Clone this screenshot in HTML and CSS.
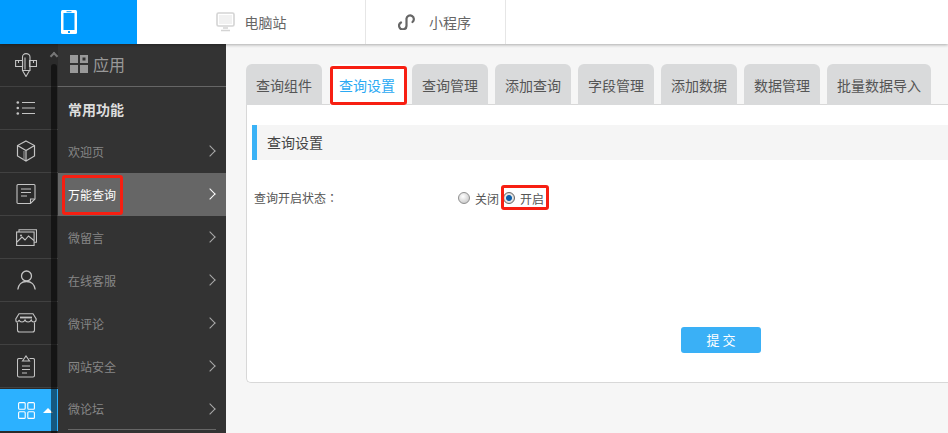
FILE: index.html
```html
<!DOCTYPE html>
<html lang="zh-CN">
<head>
<meta charset="utf-8">
<title>查询设置</title>
<link rel="stylesheet" href="styles.css">
</head>
<body>
<header class="topbar">
  <div class="device device-active">
    <svg width="16" height="24" viewBox="0 0 16 24"><rect width="16" height="24" rx="1.5" fill="#fff"/><rect x="2.5" y="3" width="11" height="17" fill="#009cff"/><rect x="5.5" y="1.2" width="5" height="1" fill="#009cff"/><rect x="7" y="21" width="2" height="2" fill="#009cff"/></svg>
  </div>
  <div class="device device-pc">
    <svg width="19" height="20" viewBox="0 0 19 20" fill="none" stroke="#d4d4d4"><rect x="1" y="1" width="17" height="13" rx="1.5" stroke-width="1.6"/><rect x="3" y="3" width="13" height="9" fill="#f1f1f1" stroke="none"/><path d="M7 16h5M5 18.5h9" stroke-width="1.6"/></svg>
    <span>电脑站</span>
  </div>
  <div class="device device-mini">
    <svg width="18" height="16" viewBox="0 0 18 16" fill="none" stroke="#666" stroke-width="2.2" stroke-linecap="round"><path d="M3 8.500A3.700 3.700 0 1 0 8.500 11.500V4.500A3.700 3.700 0 1 1 14.500 8"/></svg>
    <span>小程序</span>
  </div>
</header>
<div class="main">
  <nav class="rail">
    <div class="rail-item"><svg width="22" height="24" viewBox="0 0 22 24" fill="none" stroke="#c4c4c4" stroke-width="1.100"><path d="M.6 7.500h7v6h-7zM14.500 7.500h7v6h-7zM7.500 4c0-2 1.500-3.400 3.500-3.400S15 2 15 4v13.500H7.500z"/><path d="M7.500 17.500l3.500 6 3.500-6M3.500 7.500v2.500M18.500 7.500v2.500M10 4.500v12"/></svg></div>
    <div class="rail-item"><svg width="20" height="16" viewBox="0 0 20 16" fill="none" stroke="#c4c4c4"><path d="M6 2.500h13M6 8h13M6 13.500h13"/><circle cx="1.800" cy="2.500" r="1.300" fill="#c4c4c4" stroke="none"/><circle cx="1.800" cy="8" r="1.300" fill="#c4c4c4" stroke="none"/><circle cx="1.800" cy="13.500" r="1.300" fill="#c4c4c4" stroke="none"/></svg></div>
    <div class="rail-item"><svg width="20" height="22" viewBox="0 0 20 22" fill="none" stroke="#c4c4c4" stroke-width="1.200"><path d="M10 1l8.500 4.500v10.500L10 21 1.500 16V5.500zM1.500 5.500L10 10.500l8.500-5M10 10.500V21"/><path d="M8 11v9" stroke="#8a8a8a"/></svg></div>
    <div class="rail-item"><svg width="20" height="22" viewBox="0 0 20 22" fill="none" stroke="#c4c4c4" stroke-width="1.100"><path d="M2 1.500h16a1 1 0 0 1 1 1V16l-4.500 4.500H2a1 1 0 0 1-1-1v-17a1 1 0 0 1 1-1z"/><path d="M5 6h10M5 9.500h10M5 13h6M14.500 20v-4h4"/></svg></div>
    <div class="rail-item"><svg width="21" height="17" viewBox="0 0 21 17" fill="none" stroke="#c4c4c4" stroke-width="1.100"><rect x=".6" y="3" width="17.500" height="13.500"/><path d="M3 3V.8h17.500v12.500h-2.400M1 13l5-5 3 3 3.500-4 5.500 4.500"/><circle cx="5" cy="6.500" r="1" fill="#c4c4c4" stroke="none"/></svg></div>
    <div class="rail-item"><svg width="19" height="20" viewBox="0 0 19 20" fill="none" stroke="#c4c4c4" stroke-width="1.300"><circle cx="9.500" cy="6" r="5"/><path d="M.8 19.500c.5-4.800 3.800-8 8.700-8s8.200 3.200 8.700 8"/></svg></div>
    <div class="rail-item"><svg width="22" height="20" viewBox="0 0 22 20" fill="none" stroke="#c4c4c4" stroke-width="1.100"><path d="M4 .8h14l3.200 5.200c0 2-1 3-2.300 3-1.300 0-2.400-.8-2.700-2-.5 1.200-1.800 2-3.100 2-1.300 0-2.700-.8-3.100-2-.5 1.200-1.700 2-3 2-1.400 0-2.600-.8-3-2-.2 1.200-1 2-2.300 2C1.500 9 .8 8 .8 6z"/><path d="M2.500 9.500V17a2 2 0 0 0 2 2h13a2 2 0 0 0 2-2V9.500"/><path d="M5 4.500h12" stroke-width="1.800"/></svg></div>
    <div class="rail-item"><svg width="18" height="23" viewBox="0 0 18 23" fill="none" stroke="#c4c4c4" stroke-width="1.100"><path d="M5.500 3.500H2a1.500 1.500 0 0 0-1.500 1.500v15.500A1.500 1.500 0 0 0 2 22h14a1.500 1.500 0 0 0 1.500-1.500V5A1.500 1.500 0 0 0 16 3.500h-3.500"/><path d="M5.500 6l3.500-5 3.500 5z"/><path d="M5 11h8M5 14.500h8M5 18h5"/></svg></div>
    <div class="rail-item rail-active"><svg width="17" height="17" viewBox="0 0 17 17" fill="none" stroke="#fff" stroke-width="1.100"><rect x=".6" y=".6" width="6.600" height="6.600" rx="1"/><rect x="9.800" y=".6" width="6.600" height="6.600" rx="1"/><rect x=".6" y="9.800" width="6.600" height="6.600" rx="1"/><rect x="9.800" y="9.800" width="6.600" height="6.600" rx="1"/></svg><i class="rail-caret"></i></div>
    <div class="rail-scroll"></div>
    <i class="rail-scroll-up"></i>
  </nav>
  <aside class="panel">
    <div class="panel-head">
      <svg width="18" height="18" viewBox="0 0 18 18"><path fill="#999" d="M0 0h8v8H0zM10 10h8v8h-8zM0 10h8v8H0zM10 0h8v8h-8zM12.500 2.500v3h3v-3z" fill-rule="evenodd"/></svg>
      <span>应用</span>
    </div>
    <div class="panel-title">常用功能</div>
    <a class="panel-item"><span>欢迎页</span><i class="chev"></i></a>
    <a class="panel-item panel-active"><span>万能查询</span><i class="chev"></i><b class="mark mark-nav"></b></a>
    <a class="panel-item"><span>微留言</span><i class="chev"></i></a>
    <a class="panel-item"><span>在线客服</span><i class="chev"></i></a>
    <a class="panel-item"><span>微评论</span><i class="chev"></i></a>
    <a class="panel-item"><span>网站安全</span><i class="chev"></i></a>
    <a class="panel-item panel-last"><span>微论坛</span><i class="chev"></i></a>
  </aside>
  <main class="content">
    <div class="tabs">
      <a class="tab">查询组件</a>
      <a class="tab tab-active">查询设置<b class="mark"></b></a>
      <a class="tab">查询管理</a>
      <a class="tab">添加查询</a>
      <a class="tab">字段管理</a>
      <a class="tab">添加数据</a>
      <a class="tab">数据管理</a>
      <a class="tab tab-wide">批量数据导入</a>
    </div>
    <section class="card">
      <h2 class="card-title">查询设置</h2>
      <div class="form-row">
        <span class="form-label" lang="zh-TW">查询开启状态：</span>
        <label class="radio"><i class="dot"></i>关闭</label>
        <label class="radio radio-on"><i class="dot dot-on"></i>开启<b class="mark"></b></label>
      </div>
      <div class="form-actions"><button class="submit" type="button">提 交</button></div>
    </section>
  </main>
</div>
</body>
</html>
```

FILE: styles.css
```css
* { box-sizing: border-box; }
html, body { margin: 0; height: 433px; overflow: hidden; }
body { font-family: "Noto Sans CJK SC", "Liberation Sans", sans-serif; font-size: 12px; color: #666; background: #f6f6f6; }

.topbar { display: flex; height: 44px; background: #fff; box-shadow: 0 1px 3px rgba(0,0,0,.3); position: relative; z-index: 2; }
.device { display: flex; align-items: center; justify-content: center; font-size: 14px; color: #666; border-right: 1px solid #e6e6e6; padding-bottom: 1px; }
.device-active { width: 137px; background: #009cff; border-right: 0; padding-bottom: 0; }
.device-pc { width: 229px; gap: 10px; padding-right: 0; }
.device-mini { width: 140px; gap: 13px; padding-right: 2px; }

.main { display: flex; height: 389px; }

.rail { width: 58px; flex: none; background: #2b2b2b; position: relative; }
.rail-item { height: 43px; display: flex; align-items: center; justify-content: center; padding-right: 6px; border-bottom: 1px solid #414141; position: relative; }
.rail-active { background: #2cb1ff; border-bottom: 0; height: 42px; margin-top: 1px; }
.rail-caret { position: absolute; left: 43px; top: 19px; border: 5px solid transparent; border-top: 0; border-bottom: 5px solid #fff; }
.rail-scroll { position: absolute; left: 51px; top: 20px; width: 6px; height: 369px; background: rgba(0,0,0,.5); border-radius: 3px 3px 0 0; }
.rail-scroll-up { position: absolute; left: 51px; top: 9px; width: 6px; height: 6px; border-left: 2px solid #777; border-top: 2px solid #777; transform: rotate(45deg); }

.panel { width: 168px; flex: none; background: #333; color: #868686; font-size: 12px; }
.panel-head { height: 43px; display: flex; align-items: center; gap: 5px; padding: 0 0 2px 12px; border-bottom: 1px solid #666; font-size: 16px; color: #999; }
.panel-title { height: 43px; display: flex; align-items: center; padding-left: 10px; font-weight: 700; font-size: 14px; color: #ddd; }
.panel-item { height: 43px; display: flex; align-items: center; justify-content: space-between; padding: 0 10px 1px; position: relative; }
.panel-active { background: #666; color: #fff; }
.panel-last { height: 42px; }
.panel-last::after { content: ""; position: absolute; left: 10px; right: 10px; bottom: 0; height: 1px; background: #666; }
.chev { width: 8px; height: 8px; border-top: 1.500px solid #aaa; border-right: 1.500px solid #aaa; transform: rotate(45deg); margin-right: 2px; }
.panel-active .chev { border-color: #fff; }

.mark { position: absolute; border: 3px solid #f71f12; border-radius: 3px; pointer-events: none; }
.mark-nav { left: 4px; top: 2px; width: 61px; height: 40px; }

.content { flex: 1; min-width: 0; padding: 20px 0 0 20px; }
.tabs { display: flex; gap: 7px; height: 41px; font-size: 14px; }
.tab { width: 76px; height: 41px; display: flex; align-items: center; justify-content: center; background: #d9dadb; color: #555; border-radius: 6px 6px 0 0; position: relative; }
.tab-active { background: #fff; color: #2aa9f3; margin-left: 1px; margin-right: -1px; padding-right: 2px; z-index: 1; }
.tab-active .mark { left: 0; top: 2px; width: 77px; height: 39px; }
.tab-wide { width: 104px; }

.card { width: 740px; height: 279px; background: #fff; border: 1px solid #d8d8d8; border-right: 0; border-radius: 0 0 0 5px; padding: 20px 0 0 5px; margin-top: -1px; }
.card-title { margin: 0; height: 35px; display: flex; align-items: center; padding: 0 0 2px 10px; border-left: 5px solid #3ab2f6; background: #f5f5f5; font-size: 14px; font-weight: 400; color: #444; }
.form-row { display: flex; align-items: center; height: 26px; margin: 25px 0 0 2px; color: #555; }
.form-label { width: 204px; font-family: "Noto Sans CJK TC", sans-serif; padding-bottom: 1px; }
.radio { display: flex; align-items: center; gap: 5px; position: relative; padding-right: 4px; }
.radio-on .mark { left: -2px; top: -5px; width: 48px; height: 25px; }
.dot { width: 12px; height: 12px; border-radius: 50%; border: 1px solid #8f8f8f; background: radial-gradient(circle at 40% 35%, #fff, #bdbdbd); }
.dot-on { border-color: #666; background: radial-gradient(circle, #0a5ea8 0 2.500px, #e8e8e8 3.500px, #bbb); }
.form-actions { margin: 116px 0 0 429px; }
.submit { display: block; width: 80px; height: 26px; padding: 0 0 1px; border: 0; border-radius: 3px; background: #3ab0f6; color: #fff; font: 13px "Noto Sans CJK SC", sans-serif; }
```
